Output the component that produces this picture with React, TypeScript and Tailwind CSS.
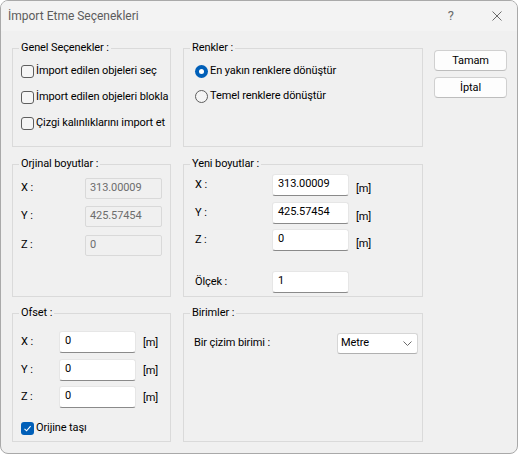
import type { ReactNode } from 'react';

function Group({ legend, className, children }: { legend: string; className: string; children?: ReactNode }) {
  return (
    <fieldset className={`border border-[#dadada] min-w-0 ${className}`}>
      <legend className="ml-[6px] px-[2px] leading-[14px]">{legend}</legend>
      {children}
    </fieldset>
  );
}

function Check({ checked, label }: { checked?: boolean; label: string }) {
  return (
    <div className="flex items-center h-[17px]">
      {checked ? (
        <div className="w-[13px] h-[13px] shrink-0 rounded-[3px] bg-[#005fb8] flex items-center justify-center">
          <svg width="9" height="9" viewBox="0 0 9 9">
            <path d="M1.5 4.8 L3.6 6.8 L7.6 2.2" fill="none" stroke="#fff" strokeWidth="1.1" />
          </svg>
        </div>
      ) : (
        <div className="w-[13px] h-[13px] shrink-0 rounded-[3px] border border-[#5e5e5e] bg-[#f5f5f5]" />
      )}
      <span className="ml-[2px] whitespace-nowrap">{label}</span>
    </div>
  );
}

function Radio({ checked, label }: { checked?: boolean; label: string }) {
  return (
    <div className="flex items-center h-[17px]">
      {checked ? (
        <div className="w-[13px] h-[13px] shrink-0 rounded-full bg-[#005fb8] flex items-center justify-center">
          <div className="w-[5px] h-[5px] rounded-full bg-white" />
        </div>
      ) : (
        <div className="w-[13px] h-[13px] shrink-0 rounded-full border border-[#5e5e5e] bg-[#f5f5f5]" />
      )}
      <span className="ml-[2px] whitespace-nowrap">{label}</span>
    </div>
  );
}

function Field({ value, disabled }: { value: string; disabled?: boolean }) {
  if (disabled) {
    return (
      <div className="w-[77px] h-[21px] border border-[#d9d9d9] rounded-[2px] bg-[#f0f0f0] text-[#6d6d6d] pl-[4px] pt-[2px] leading-[14px]">
        {value}
      </div>
    );
  }
  return (
    <div className="w-[77px] h-[22px] border border-[#e6e6e6] border-b-[#8a8a8a] rounded-[3px] bg-white pl-[5px] pt-[2px] leading-[14px]">
      {value}
    </div>
  );
}

export default function App() {
  return (
    <div className="w-[520px] h-[456px] bg-white font-['Roboto','Liberation_Sans',sans-serif] text-[11px] tracking-[-0.1px] text-black whitespace-nowrap">
      <div className="w-[518px] h-[454px] border border-[#a9a9a9] rounded-[8px] overflow-hidden bg-[#f0f0f0] flex flex-col">
        {/* Title bar */}
        <div className="h-[30px] bg-[#f3f3f3] flex items-center pl-[7px] pr-[15px] text-[12px] tracking-normal text-[#5c5c5c]">
          <span>İmport Etme Seçenekleri</span>
          <span className="ml-auto text-[13px] text-[#6a6a6a]">?</span>
          <svg className="ml-[38px]" width="10" height="10" viewBox="0 0 10 10">
            <path d="M0.5 0.5 L9.5 9.5 M9.5 0.5 L0.5 9.5" stroke="#6a6a6a" strokeWidth="1" />
          </svg>
        </div>

        {/* Body */}
        <div className="flex pl-[11px] pt-[10px]">
          <div className="flex flex-col">
            <div className="flex gap-x-[12px] h-[106px]">
              <Group legend="Genel Seçenekler :" className="w-[159px] h-full">
                <div className="flex flex-col gap-[9px] pl-[8px] pt-[8px]">
                  <Check label="İmport edilen objeleri seç" />
                  <Check label="İmport edilen objeleri blokla" />
                  <Check label="Çizgi kalınlıklarını import et" />
                </div>
              </Group>
              <Group legend="Renkler :" className="w-[240px] h-full">
                <div className="flex flex-col gap-[8px] pl-[11px] pt-[8px]">
                  <Radio checked label="En yakın renklere dönüştür" />
                  <Radio label="Temel renklere dönüştür" />
                </div>
              </Group>
            </div>

            <div className="flex gap-x-[12px] h-[140px] mt-[10px]">
              <Group legend="Orjinal boyutlar :" className="w-[159px] h-full">
                <div className="flex flex-col pl-[8px] pt-[7px]">
                  <div className="flex items-center h-[21px]">
                    <span className="w-[64px]">X :</span>
                    <Field disabled value="313.00009" />
                  </div>
                  <div className="flex items-center h-[21px] mt-[7px]">
                    <span className="w-[64px]">Y :</span>
                    <Field disabled value="425.57454" />
                  </div>
                  <div className="flex items-center h-[21px] mt-[8px]">
                    <span className="w-[64px]">Z :</span>
                    <Field disabled value="0" />
                  </div>
                </div>
              </Group>
              <Group legend="Yeni boyutlar :" className="w-[240px] h-full">
                <div className="flex flex-col pl-[11px] pt-[3px]">
                  <div className="flex items-center h-[22px]">
                    <span className="w-[77px]">X :</span>
                    <Field value="313.00009" />
                    <span className="ml-[7px] self-start mt-[8px] leading-[14px]">[m]</span>
                  </div>
                  <div className="flex items-center h-[22px] mt-[6px]">
                    <span className="w-[77px]">Y :</span>
                    <Field value="425.57454" />
                    <span className="ml-[7px] self-start mt-[8px] leading-[14px]">[m]</span>
                  </div>
                  <div className="flex items-center h-[22px] mt-[5px]">
                    <span className="w-[77px]">Z :</span>
                    <Field value="0" />
                    <span className="ml-[7px] self-start mt-[8px] leading-[14px]">[m]</span>
                  </div>
                  <div className="flex items-center h-[22px] mt-[20px]">
                    <span className="w-[77px]">Ölçek :</span>
                    <Field value="1" />
                  </div>
                </div>
              </Group>
            </div>

            <div className="flex gap-x-[12px] h-[136px] mt-[9px]">
              <Group legend="Ofset :" className="w-[159px] h-full">
                <div className="flex flex-col pl-[8px] pt-[11px]">
                  <div className="flex items-center h-[22px]">
                    <span className="w-[38px]">X :</span>
                    <Field value="0" />
                    <span className="ml-[7px] self-start mt-[5px] leading-[14px]">[m]</span>
                  </div>
                  <div className="flex items-center h-[22px] mt-[6px]">
                    <span className="w-[38px]">Y :</span>
                    <Field value="0" />
                    <span className="ml-[7px] self-start mt-[5px] leading-[14px]">[m]</span>
                  </div>
                  <div className="flex items-center h-[22px] mt-[5px]">
                    <span className="w-[38px]">Z :</span>
                    <Field value="0" />
                    <span className="ml-[7px] self-start mt-[5px] leading-[14px]">[m]</span>
                  </div>
                  <div className="mt-[12px]">
                    <Check checked label="Orijine taşı" />
                  </div>
                </div>
              </Group>
              <Group legend="Birimler :" className="w-[240px] h-full">
                <div className="flex items-center h-[21px] pl-[10px] mt-[13px]">
                  <span className="w-[143px]">Bir çizim birimi :</span>
                  <div className="w-[81px] h-[21px] border border-[#d6d6d6] border-b-[#b0b0b0] rounded-[3px] bg-white flex items-center pl-[3px] pr-[5px]">
                    <span>Metre</span>
                    <svg className="ml-auto" width="9" height="5" viewBox="0 0 9 5">
                      <path d="M0.5 0.5 L4.5 4.5 L8.5 0.5" fill="none" stroke="#6a6a6a" strokeWidth="1" />
                    </svg>
                  </div>
                </div>
              </Group>
            </div>
          </div>

          {/* Buttons */}
          <div className="flex flex-col gap-[6px] ml-[11px] pt-[9px]">
            <button className="w-[73px] h-[21px] border border-[#d0d0d0] border-b-[#bdbdbd] rounded-[4px] bg-[#fdfdfd] leading-[14px]">
              Tamam
            </button>
            <button className="w-[73px] h-[21px] border border-[#d0d0d0] border-b-[#bdbdbd] rounded-[4px] bg-[#fdfdfd] leading-[14px]">
              İptal
            </button>
          </div>
        </div>
      </div>
    </div>
  );
}
